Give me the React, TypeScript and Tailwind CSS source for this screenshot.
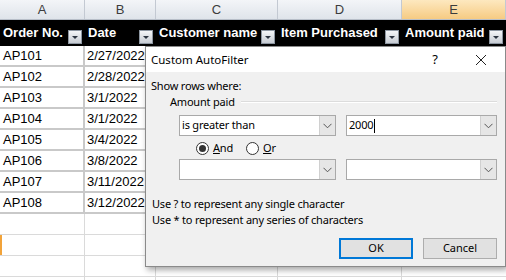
import React from "react"

const cols = ["w-[85px]", "w-[71px]", "w-[122px]", "w-[124px]", "flex-1"]
const letters = ["A", "B", "C", "D", "E"]
const heads = ["Order No.", "Date", "Customer name", "Item Purchased", "Amount paid"]
const rows = [
    ["AP101", "2/27/2022"],
    ["AP102", "2/28/2022"],
    ["AP103", "3/1/2022"],
    ["AP104", "3/1/2022"],
    ["AP105", "3/4/2022"],
    ["AP106", "3/8/2022"],
    ["AP107", "3/11/2022"],
    ["AP108", "3/12/2022"],
]

function FilterButton() {
    return (
        <div className="w-[14px] h-[14px] mb-[1px] flex items-center justify-center bg-gradient-to-b from-[#f4f6f8] to-[#c7ccd3] border border-[#8d96a1]">
            <div className="w-0 h-0 border-l-[3px] border-r-[3px] border-t-[3px] border-l-transparent border-r-transparent border-t-[#2c3440] mt-[1px]" />
        </div>
    )
}

function Chevron() {
    return (
        <svg width="9" height="6" viewBox="0 0 9 6">
            <path d="M0.5 0.8 L4.5 4.8 L8.5 0.8" fill="none" stroke="#555" strokeWidth="1" />
        </svg>
    )
}

function Combo({ w, text, caret }: { w: string; text?: string; caret?: boolean }) {
    return (
        <div className={`${w} h-[21px] flex border border-[#a9a9a9] bg-white`}>
            <div className="flex-1 flex items-center pl-[2px] text-black">
                {text}
                {caret && <span className="w-px h-[14px] bg-black ml-[1px]" />}
            </div>
            <div className="w-[16px] flex items-center justify-center bg-[#e6e6e6] border-l border-[#d0d0d0]">
                <Chevron />
            </div>
        </div>
    )
}

function Dialog() {
    return (
        <div className="absolute left-[145px] top-[46px] w-[361px] h-[221px] border border-[#8a8a8a] bg-[#f0f0f0] shadow-[2px_3px_6px_rgba(0,0,0,0.35)] flex flex-col font-['Noto_Sans',sans-serif] text-[11px] tracking-[-0.2px] text-black">
            <div className="h-[25px] bg-white flex items-center pl-[5px] text-[11.5px] tracking-normal">
                <span className="flex-1">Custom AutoFilter</span>
                <span className="w-[20px] text-center mr-[30px] text-[13px]">?</span>
                <svg width="12" height="12" viewBox="0 0 12 12" className="mr-[18px]">
                    <path d="M1 1 L11 11 M11 1 L1 11" stroke="#222" strokeWidth="1" />
                </svg>
            </div>
            <div className="flex-1 flex flex-col pt-[6px] pl-[5px] pr-[8px]">
                <div className="leading-[16px]">Show rows where:</div>
                <div className="leading-[16px] flex items-center pl-[19px]">
                    <span>Amount paid</span>
                    <div className="flex-1 ml-[6px] h-[2px] border-t border-[#dcdcdc] border-b border-b-white" />
                </div>
                <div className="flex mt-[5px] pl-[28px] gap-[10px]">
                    <Combo w="w-[157px]" text="is greater than" />
                    <Combo w="w-[151px]" text="2000" caret />
                </div>
                <div className="h-[18px] mt-[3px] flex items-center pl-[45px]">
                    <div className="w-[13px] h-[13px] rounded-full border border-[#333] bg-white flex items-center justify-center">
                        <div className="w-[7px] h-[7px] rounded-full bg-[#333]" />
                    </div>
                    <span className="ml-[4px]"><u>A</u>nd</span>
                    <div className="w-[13px] h-[13px] rounded-full border border-[#333] bg-white ml-[13px]" />
                    <span className="ml-[4px]"><u>O</u>r</span>
                </div>
                <div className="flex mt-[2px] pl-[28px] gap-[10px]">
                    <Combo w="w-[157px]" />
                    <Combo w="w-[151px]" />
                </div>
                <div className="mt-[16px] pl-[1px] leading-[16px]">Use ? to represent any single character</div>
                <div className="pl-[1px] leading-[16px]">Use * to represent any series of characters</div>
                <div className="flex justify-end gap-[10px] mt-[10px] tracking-normal">
                    <div className="w-[74px] h-[21px] flex items-center justify-center bg-[#e1e1e1] border-2 border-[#0078d7]">OK</div>
                    <div className="w-[74px] h-[21px] flex items-center justify-center bg-[#e1e1e1] border border-[#adadad]">Cancel</div>
                </div>
            </div>
        </div>
    )
}

export default function App() {
    return (
        <div className="relative w-[506px] h-[280px] overflow-hidden bg-white font-['Liberation_Sans',Arial,sans-serif] text-[13px] text-black">
            {/* column letters */}
            <div className="flex h-[20px] border-b border-[#b7bec8]">
                {letters.map((l, i) => (
                    <div
                        key={l}
                        className={`${cols[i]} flex items-center justify-center border-r border-[#c3c9d2] text-[#3c3c3c] ${
                            i === 4 ? "bg-gradient-to-b from-[#fde8bf] to-[#f6cb82]" : "bg-gradient-to-b from-[#f3f5f8] to-[#dfe4ea]"
                        }`}
                    >
                        {l}
                    </div>
                ))}
            </div>

            {/* header row */}
            <div className="flex h-[26px] bg-black">
                {heads.map((h, i) => (
                    <div key={h} className={`${cols[i]} flex items-end justify-between pl-[3px] pr-[3px] pb-[1px]`}>
                        <span className="text-white font-bold self-center leading-[16px] pt-[1px]">{h}</span>
                        <FilterButton />
                    </div>
                ))}
            </div>

            {/* data rows */}
            {rows.map((r) => (
                <div key={r[0]} className="flex h-[21px] border-b-2 border-[#c9c9c9]">
                    <div className={`${cols[0]} flex items-center pl-[3px] border-r-2 border-[#c9c9c9]`}>{r[0]}</div>
                    <div className={`${cols[1]} flex items-center pl-[2px] border-r-2 border-[#c9c9c9]`}>{r[1]}</div>
                    <div className={`${cols[2]} border-r-2 border-[#c9c9c9]`} />
                    <div className={`${cols[3]} border-r-2 border-[#c9c9c9]`} />
                    <div className={cols[4]} />
                </div>
            ))}

            {/* empty rows */}
            {[0, 1, 2, 3].map((n) => (
                <div key={n} className="flex h-[21px] border-b border-[#dadada]">
                    <div className={`${cols[0]} border-r border-[#dadada] ${n === 1 ? "border-l-2 border-l-[#f2a33a]" : ""}`} />
                    <div className={`${cols[1]} border-r border-[#dadada]`} />
                    <div className={`${cols[2]} border-r border-[#dadada]`} />
                    <div className={`${cols[3]} border-r border-[#dadada]`} />
                    <div className={cols[4]} />
                </div>
            ))}

            <Dialog />
        </div>
    )
}
